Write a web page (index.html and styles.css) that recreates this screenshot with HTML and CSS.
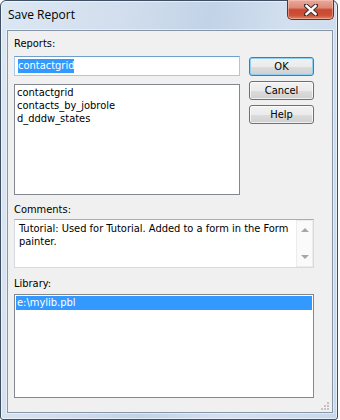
FILE: index.html
```html
<!DOCTYPE html>
<html lang="en">
<head>
    <meta charset="UTF-8">
    <meta name="viewport" content="width=device-width, initial-scale=1.0">
    <title>Save Report</title>
    <link rel="stylesheet" href="styles.css">
</head>
<body>
    <div class="window">
        <div class="titlebar">
            <span class="title">Save Report</span>
            <button class="close-btn" aria-label="Close">
                <svg width="14" height="12" viewBox="0 0 14 12">
                    <path d="M2 1.5 L12 10.5 M12 1.5 L2 10.5" stroke="#3b3030" stroke-width="4.4" stroke-linecap="square"/>
                    <path d="M2.5 2 L11.5 10 M11.5 2 L2.5 10" stroke="#fff" stroke-width="2.4" stroke-linecap="square"/>
                </svg>
            </button>
        </div>

        <div class="client">
            <div class="top">
                <div class="main-col">
                    <div class="field-label">Reports:</div>
                    <div class="edit"><span class="sel">contactgrid</span></div>
                    <ul class="listbox reports">
                        <li>contactgrid</li>
                        <li>contacts_by_jobrole</li>
                        <li>d_dddw_states</li>
                    </ul>
                </div>
                <div class="buttons">
                    <button class="btn default">OK</button>
                    <button class="btn">Cancel</button>
                    <button class="btn">Help</button>
                </div>
            </div>

            <div class="field-label comments-label">Comments:</div>
            <div class="comments">
                <div class="comments-text">Tutorial: Used for Tutorial. Added to a form in the Form<br>painter.</div>
                <div class="scrollbar">
                    <span class="arrow up"></span>
                    <span class="arrow down"></span>
                </div>
            </div>

            <div class="field-label library-label">Library:</div>
            <ul class="listbox library">
                <li class="selected">e:\mylib.pbl</li>
            </ul>

            <svg class="grip" width="10" height="10" viewBox="0 0 10 10">
                <rect x="7" y="1" width="2" height="2" fill="#c4c4c4"/>
                <rect x="4" y="4" width="2" height="2" fill="#c4c4c4"/>
                <rect x="7" y="4" width="2" height="2" fill="#c4c4c4"/>
                <rect x="1" y="7" width="2" height="2" fill="#c4c4c4"/>
                <rect x="4" y="7" width="2" height="2" fill="#c4c4c4"/>
                <rect x="7" y="7" width="2" height="2" fill="#c4c4c4"/>
            </svg>
        </div>
    </div>
</body>
</html>
```

FILE: styles.css
```css
* {
    margin: 0;
    padding: 0;
    box-sizing: border-box;
}
body {
    background: #fff;
    font-family: 'DejaVu Sans Condensed', 'DejaVu Sans', sans-serif;
    font-size: 11px;
    color: #000;
}
.window {
    width: 338px;
    height: 420px;
    border: 1px solid #3e4f63;
    border-radius: 6px 6px 3px 3px;
    background: linear-gradient(100deg, #dce7f4 0%, #d2deed 30%, #c2d3e7 52%, #d3e0ef 72%, #c8d8ea 100%);
    box-shadow: inset 0 0 0 1px rgba(255, 255, 255, 0.55);
}
.titlebar {
    height: 29px;
    display: flex;
    align-items: flex-start;
    justify-content: space-between;
    padding-left: 7px;
}
.title {
    font-family: 'Open Sans', 'Noto Sans', sans-serif;
    font-size: 12px;
    line-height: 16px;
    margin-top: 6px;
    color: #000;
}
.close-btn {
    width: 47px;
    height: 20px;
    margin-top: -1px;
    margin-right: 3px;
    border: 1px solid #6a2e26;
    border-top: none;
    border-radius: 0 0 5px 5px;
    background: linear-gradient(#e9aa9c 0%, #de8a78 40%, #c9472f 52%, #cc5038 80%, #de8561 100%);
    box-shadow: inset 0 0 0 1px rgba(255, 210, 200, 0.45);
    display: flex;
    align-items: center;
    justify-content: center;
    cursor: pointer;
}
.client {
    position: relative;
    margin-left: 6px;
    width: 326px;
    height: 383px;
    border: 1px solid #8795a9;
    background: #f0f0f0;
    padding: 6px 0 0 6px;
    box-shadow: 0 0 0 1px rgba(255, 255, 255, 0.45);
}
.top {
    display: flex;
    gap: 9px;
}
.main-col {
    width: 226px;
}
.field-label {
    height: 13px;
    line-height: 13px;
}
.edit {
    margin-top: 6px;
    height: 20px;
    background: #fff;
    border: 1px solid #a9c8e6;
    border-top-color: #6d9fcf;
    padding: 2px 0 0 3px;
}
.sel {
    display: inline-block;
    height: 14px;
    line-height: 14px;
    background: #3399ff;
    color: #fff;
}
.listbox {
    list-style: none;
    background: #fff;
    border: 1px solid #828790;
    padding: 1px;
}
.listbox li {
    height: 13px;
    line-height: 13px;
    padding-left: 1px;
}
.reports {
    margin-top: 8px;
    height: 111px;
}
.buttons {
    display: flex;
    flex-direction: column;
    gap: 5px;
    padding-top: 20px;
}
.btn {
    width: 65px;
    height: 19px;
    font-family: inherit;
    font-size: 11px;
    color: #000;
    border: 1px solid #707070;
    border-radius: 3px;
    background: linear-gradient(#f2f2f2 0%, #ebebeb 50%, #dddddd 51%, #cfcfcf 100%);
    box-shadow: inset 0 0 0 1px rgba(255, 255, 255, 0.7);
    cursor: pointer;
}
.btn.default {
    border-color: #3c7fb1;
    box-shadow: inset 0 0 0 1px #8fd0f2;
}
.comments-label {
    margin-top: 8px;
}
.comments {
    margin-top: 3px;
    width: 300px;
    height: 49px;
    background: #fff;
    border: 1px solid #d5d9e0;
    border-top-color: #abadb3;
    display: flex;
}
.comments-text {
    flex: 1;
    padding: 2px 4px;
    line-height: 13px;
    white-space: nowrap;
}
.scrollbar {
    width: 17px;
    border: 1px solid #ececec;
    background: #fafafa;
    display: flex;
    flex-direction: column;
    justify-content: space-between;
    align-items: center;
    padding: 7px 0 7px;
}
.arrow {
    width: 0;
    height: 0;
    border-left: 4px solid transparent;
    border-right: 4px solid transparent;
}
.arrow.up {
    border-bottom: 4px solid #a6a6a6;
}
.arrow.down {
    border-top: 4px solid #a6a6a6;
}
.library-label {
    margin-top: 9px;
}
.library {
    margin-top: 4px;
    width: 300px;
    height: 104px;
}
.library li.selected {
    height: 14px;
    line-height: 14px;
    background: #3399ff;
    color: #fff;
}
.grip {
    position: absolute;
    right: 2px;
    bottom: 1px;
}
```
